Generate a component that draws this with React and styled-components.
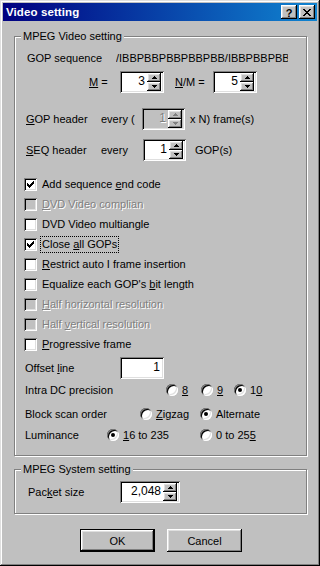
import React from 'react'
import styled, { createGlobalStyle, css } from 'styled-components'

const GlobalStyle = createGlobalStyle`
    html, body {
        margin:0;
        padding:0;
        background:#c0c0c0;
    }
    body{
        font-family:"Liberation Sans", Arial, sans-serif;
        font-size:11px;
        color:#000;
    }
`

const raised = css`
    box-shadow: inset -1px -1px #000, inset 1px 1px #fff, inset -2px -2px #808080, inset 2px 2px #dfdfdf;
`
const sunken = css`
    box-shadow: inset 1px 1px #808080, inset -1px -1px #fff, inset 2px 2px #000, inset -2px -2px #dfdfdf;
`
const disabledText = css`
    color:#808080;
    text-shadow:1px 1px 0 #fff;
`

const Check = () => (
    <svg width="7" height="7" viewBox="0 0 7 7" shapeRendering="crispEdges">
        {[2, 3, 4, 3, 2, 1, 0].map((y, x) => (
            <rect key={x} x={x} y={y} width="1" height="3" fill="#000" />
        ))}
    </svg>
)

const CloseGlyph = () => (
    <svg width="8" height="7" viewBox="0 0 8 7" shapeRendering="crispEdges">
        {[[0, 6], [1, 5], [2, 4], [3, 3], [2, 4], [1, 5], [0, 6]].map(([a, b], y) => (
            <g key={y} fill="#000">
                <rect x={a} y={y} width="2" height="1" />
                <rect x={b} y={y} width="2" height="1" />
            </g>
        ))}
    </svg>
)

const Arrow = ({ up, disabled }) => (
    <svg width="5" height="3" viewBox="0 0 5 3" shapeRendering="crispEdges">
        {[0, 1, 2].map(i => (
            <rect
                key={i}
                x={i}
                y={up ? 2 - i : i}
                width={5 - i * 2}
                height="1"
                fill={disabled ? '#808080' : '#000'}
            />
        ))}
    </svg>
)

const Spin = ({ value, width, disabled }) => (
    <SpinBox $w={width} $disabled={disabled}>
        <SpinValue $disabled={disabled}>{value}</SpinValue>
        <SpinButtons>
            <SpinBtn><Arrow up disabled={disabled} /></SpinBtn>
            <SpinBtn><Arrow disabled={disabled} /></SpinBtn>
        </SpinButtons>
    </SpinBox>
)

const CheckItem = ({ checked, disabled, focused, children }) => (
    <CheckRow>
        <CheckBox $disabled={disabled}>{checked && <Check />}</CheckBox>
        <CheckLabel $disabled={disabled} $focused={focused}>{children}</CheckLabel>
    </CheckRow>
)

const RadioItem = ({ width, checked, children }) => (
    <RadioOption $w={width}>
        <RadioCircle>{checked && <RadioDot />}</RadioCircle>
        <span>{children}</span>
    </RadioOption>
)

const App = () => {
    return (
        <Window>
            <GlobalStyle />
            <TitleBar>
                <Title>Video setting</Title>
                <TitleButtons>
                    <CaptionButton>?</CaptionButton>
                    <CaptionButton><CloseGlyph /></CaptionButton>
                </TitleButtons>
            </TitleBar>
            <Body>
                <Group>
                    <Legend>MPEG Video setting</Legend>
                    <Row $h={14} $pl={3}>
                        <Cell $w={89}>GOP sequence</Cell>
                        <Sequence>/IBBPBBPBBPBBPBB/IBBPBBPBBPBBPBB</Sequence>
                    </Row>
                    <Row $mt={6} $pl={65}>
                        <Cell $w={31}><u>M</u> =</Cell>
                        <Spin value="3" width={44} />
                        <Cell $w={38} $ml={11}><u>N</u>/M =</Cell>
                        <Spin value="5" width={44} />
                    </Row>
                    <Row $mt={15} $pl={2}>
                        <Cell $w={75}><u>G</u>OP header</Cell>
                        <Cell $w={41}>every (</Cell>
                        <Spin value="1" width={43} disabled />
                        <Cell $ml={5}>x N) frame(s)</Cell>
                    </Row>
                    <Row $mt={9} $pl={2}>
                        <Cell $w={75}><u>S</u>EQ header</Cell>
                        <Cell $w={42}>every</Cell>
                        <Spin value="1" width={43} />
                        <Cell $ml={9}>GOP(s)</Cell>
                    </Row>
                    <CheckList>
                        <CheckItem checked>Add sequence <u>e</u>nd code</CheckItem>
                        <CheckItem disabled><u>D</u>VD Video complian</CheckItem>
                        <CheckItem>DVD Video multiangle</CheckItem>
                        <CheckItem checked focused>Close <u>a</u>ll GOPs</CheckItem>
                        <CheckItem><u>R</u>estrict auto I frame insertion</CheckItem>
                        <CheckItem>Equalize each GOP's <u>b</u>it length</CheckItem>
                        <CheckItem disabled><u>H</u>alf horizontal resolution</CheckItem>
                        <CheckItem disabled>Half <u>v</u>ertical resolution</CheckItem>
                        <CheckItem><u>P</u>rogressive frame</CheckItem>
                    </CheckList>
                    <Row $mt={6} $pl={1}>
                        <Cell $w={95}>Offset <u>l</u>ine</Cell>
                        <Edit $w={44}>1</Edit>
                    </Row>
                    <Row $mt={4} $h={14} $pl={1}>
                        <Cell $w={141}>Intra DC precision</Cell>
                        <RadioItem width={35}><u>8</u></RadioItem>
                        <RadioItem width={33}><u>9</u></RadioItem>
                        <RadioItem checked>1<u>0</u></RadioItem>
                    </Row>
                    <Row $mt={10} $h={14} $pl={1}>
                        <Cell $w={115}>Block scan order</Cell>
                        <RadioItem width={60}><u>Z</u>igzag</RadioItem>
                        <RadioItem checked>Alternate</RadioItem>
                    </Row>
                    <Row $mt={7} $h={14} $pl={1}>
                        <Cell $w={82}>Luminance</Cell>
                        <RadioItem width={93} checked><u>1</u>6 to 235</RadioItem>
                        <RadioItem>0 to 25<u>5</u></RadioItem>
                    </Row>
                </Group>
                <Group $system>
                    <Legend>MPEG System setting</Legend>
                    <Row $pl={4}>
                        <Cell $w={92}>Pac<u>k</u>et size</Cell>
                        <Spin value="2,048" width={60} />
                    </Row>
                </Group>
                <ButtonRow>
                    <PushButton $default>OK</PushButton>
                    <PushButton>Cancel</PushButton>
                </ButtonRow>
            </Body>
        </Window>
    )
}

const Window = styled.div`
    width:320px;
    height:566px;
    box-sizing:border-box;
    padding:3px;
    display:flex;
    flex-direction:column;
    background:#c0c0c0;
    box-shadow: inset -1px -1px #000, inset 1px 1px #dfdfdf, inset -2px -2px #808080, inset 2px 2px #fff;
`

const TitleBar = styled.div`
    height:18px;
    flex:none;
    display:flex;
    align-items:center;
    justify-content:space-between;
    padding:0 2px 0 3px;
    background:linear-gradient(90deg, #000080, #1084d0);
`

const Title = styled.span`
    color:#fff;
    font-weight:700;
    font-size:11.5px;
    letter-spacing:0.1px;
`

const TitleButtons = styled.div`
    display:flex;
    gap:2px;
`

const CaptionButton = styled.div`
    width:16px;
    height:14px;
    box-sizing:border-box;
    display:flex;
    align-items:center;
    justify-content:center;
    background:#c0c0c0;
    font-weight:700;
    font-size:11px;
    line-height:14px;
    padding-top:1px;
    ${raised}
`

const Body = styled.div`
    flex:1;
    display:flex;
    flex-direction:column;
    padding:9px 10px 0 11px;
`

const Group = styled.fieldset`
    margin:${p => p.$system ? '7px 0 0 0' : '0'};
    padding:${p => p.$system ? '5px 9px 10px 9px' : '8px 9px 13px 9px'};
    border:1px solid #808080;
    box-shadow: inset 1px 1px #fff, 1px 1px #fff;
    min-width:0;
`

const Legend = styled.legend`
    padding:0 2px;
    margin-left:-3px;
    line-height:13px;
    background:#c0c0c0;
`

const Row = styled.div`
    display:flex;
    align-items:center;
    height:${p => p.$h || 22}px;
    margin-top:${p => p.$mt || 0}px;
    padding-left:${p => p.$pl || 0}px;
    white-space:nowrap;
`

const Cell = styled.span`
    flex:none;
    width:${p => p.$w ? `${p.$w}px` : 'auto'};
    margin-left:${p => p.$ml || 0}px;
`

const Sequence = styled.span`
    width:172px;
    overflow:hidden;
    white-space:nowrap;
`

const SpinBox = styled.div`
    flex:none;
    display:flex;
    width:${p => p.$w}px;
    height:22px;
    box-sizing:border-box;
    padding:2px;
    background:${p => p.$disabled ? '#c0c0c0' : '#fff'};
    ${sunken}
`

const SpinValue = styled.span`
    flex:1;
    text-align:right;
    padding-right:2px;
    line-height:17px;
    font-size:12px;
    ${p => p.$disabled && disabledText}
`

const SpinButtons = styled.div`
    width:14px;
    display:flex;
    flex-direction:column;
    margin-right:1px;
`

const SpinBtn = styled.div`
    flex:1;
    display:flex;
    align-items:center;
    justify-content:center;
    background:#c0c0c0;
    ${raised}
`

const Edit = styled.div`
    flex:none;
    width:${p => p.$w}px;
    height:22px;
    box-sizing:border-box;
    padding:2px 4px;
    background:#fff;
    text-align:right;
    line-height:17px;
    font-size:12px;
    ${sunken}
`

const CheckList = styled.div`
    display:flex;
    flex-direction:column;
    gap:7px;
    margin-top:17px;
`

const CheckRow = styled.div`
    display:flex;
    align-items:center;
    height:13px;
    white-space:nowrap;
`

const CheckBox = styled.span`
    width:13px;
    height:13px;
    box-sizing:border-box;
    display:flex;
    align-items:center;
    justify-content:center;
    margin-right:5px;
    background:${p => p.$disabled ? '#c0c0c0' : '#fff'};
    ${sunken}
`

const CheckLabel = styled.span`
    line-height:13px;
    ${p => p.$disabled && disabledText}
    ${p => p.$focused && css`
        outline:1px dotted #000;
        outline-offset:1px;
    `}
`

const RadioOption = styled.label`
    flex:none;
    width:${p => p.$w ? `${p.$w}px` : 'auto'};
    display:flex;
    align-items:center;
    gap:4px;
`

const RadioCircle = styled.span`
    width:12px;
    height:12px;
    box-sizing:border-box;
    border-radius:50%;
    display:flex;
    align-items:center;
    justify-content:center;
    background:#fff;
    box-shadow: inset 1px 1px #808080, inset -1px -1px #fff, inset 2px 2px #000, inset -2px -2px #dfdfdf;
`

const RadioDot = styled.span`
    width:4px;
    height:4px;
    border-radius:50%;
    background:#000;
`

const ButtonRow = styled.div`
    display:flex;
    justify-content:center;
    gap:12px;
    margin-top:15px;
    padding-left:1px;
`

const PushButton = styled.div`
    width:75px;
    height:23px;
    box-sizing:border-box;
    display:flex;
    align-items:center;
    justify-content:center;
    background:#c0c0c0;
    font-size:11px;
    ${p => p.$default ? css`
        border:1px solid #000;
        box-shadow: inset -1px -1px #000, inset 1px 1px #fff, inset -2px -2px #808080, inset 2px 2px #dfdfdf;
    ` : raised}
`

export default App
